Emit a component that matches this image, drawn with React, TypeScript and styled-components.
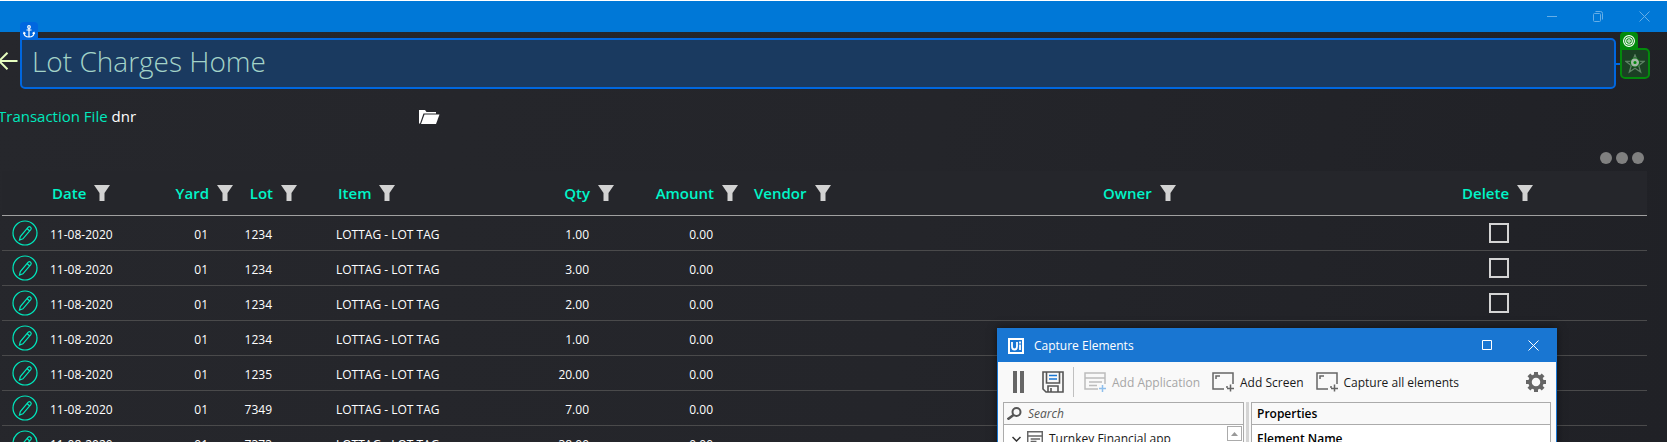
import React from 'react';
import styled, { createGlobalStyle } from 'styled-components';

const Global = createGlobalStyle`
  * { box-sizing: border-box; }
  body { margin: 0; background: #24252a; }
  button { font: inherit; color: inherit; background: none; border: 0; padding: 0; display: flex; align-items: center; }
  svg { display: block; flex: none; }
`;

const Page = styled.div`
  position: relative;
  height: 100vh;
  overflow: hidden;
  color: #fff;
  font-family: 'Open Sans', 'Noto Sans', sans-serif;
  font-size: 12px;
  background: linear-gradient(100deg, #26272c 0%, #24252a 55%, #202126 100%);
`;

const TitleBar = styled.header`
  display: flex;
  justify-content: flex-end;
  align-items: center;
  gap: 36px;
  height: 32px;
  padding-right: 17px;
  border-top: 1px solid #fff;
  background: #0078d7;
  color: #66aee7;
`;

const HeadingRow = styled.div`
  display: flex;
  align-items: center;
  margin-top: 6px;
  padding-right: 17px;
`;

const BackButton = styled.button`
  width: 20px;
  margin-bottom: 5px;
  color: #e6ffc0;
`;

const AnchorBox = styled.div`
  position: relative;
  flex: 1;
  height: 51px;
  padding-left: 10px;
  border: 2px solid #0067df;
  border-radius: 0 5px 5px 5px;
  background: #1a3a60;
`;

const Heading = styled.h1`
  margin: 0;
  font-size: 28px;
  line-height: 42px;
  font-weight: 300;
  color: #a3d3c8;
`;

const Badge = styled.span<{ $color: string }>`
  position: absolute;
  left: -2px;
  bottom: 100%;
  display: grid;
  place-items: center;
  width: 18px;
  height: 18px;
  border-radius: 4px 4px 0 0;
  background: ${p => p.$color};
  color: #fff;
`;

const Connector = styled.div`
  width: 4px;
  height: 2px;
  background: #0067df;
`;

const TargetBox = styled.div`
  position: relative;
  display: grid;
  place-items: center;
  width: 30px;
  height: 31px;
  border: 2px solid #038a0c;
  border-radius: 0 5px 5px 5px;
  background: #1b4024;
`;

const FileRow = styled.div`
  display: flex;
  align-items: center;
  height: 24px;
  margin-top: 16px;
  font-size: 15px;
`;

const FileName = styled.div`
  display: flex;
  gap: 4px;
  width: 421px;
  margin: 0 0 2px -2px;
`;

const FileLabel = styled.span`
  color: #00e8bd;
`;

const MoreRow = styled.div`
  display: flex;
  justify-content: flex-end;
  margin: 23px 23px 7px 0;
`;

const MoreButton = styled.button`
  gap: 4px;
`;

const Dot = styled.span`
  width: 12px;
  height: 12px;
  border-radius: 50%;
  background: #808080;
`;

const TableWrap = styled.div`
  padding: 0 20px 0 2px;
`;

const Table = styled.table`
  width: 100%;
  table-layout: fixed;
  border-collapse: separate;
  border-spacing: 0;
`;

type CellProps = { $right?: boolean; $inset?: number; $text?: boolean };

const Th = styled.th<CellProps>`
  height: 45px;
  padding: 0 2px 0 ${p => (p.$inset ?? 0) + 4}px;
  border-bottom: 1px solid #a0a0a0;
  background: #25262b;
  color: #00f5c8;
  font-size: 15px;
  font-weight: 600;
`;

const ThContent = styled.div<CellProps>`
  display: flex;
  align-items: center;
  justify-content: ${p => (p.$right ? 'flex-end' : 'flex-start')};
  gap: 8px;
`;

const Td = styled.td<CellProps>`
  height: 35px;
  padding: ${p => (p.$text ? 2 : 0)}px ${p => (p.$right ? 27 : 0)}px 0 ${p => (p.$inset ?? 0) + 2}px;
  border-bottom: 1px solid #4a4a4b;
  text-align: ${p => (p.$right ? 'right' : 'left')};
  white-space: nowrap;
`;

const EditButton = styled.button`
  margin-left: 10px;
  color: #00e8bd;
`;

const Check = styled.input`
  appearance: none;
  display: block;
  width: 20px;
  height: 20px;
  margin: 0 0 0 29px;
  border: 2px solid #d4d4d4;
`;

const Dialog = styled.section`
  position: absolute;
  top: 328px;
  right: 110px;
  width: 560px;
  height: 420px;
  display: flex;
  flex-direction: column;
  border: 1px solid #1976d2;
  background: #f9f9f9;
  color: #1a1a1a;
  box-shadow: 0 0 8px rgba(0, 0, 0, 0.5);
`;

const DialogTitle = styled.div`
  display: flex;
  align-items: center;
  gap: 10px;
  height: 33px;
  padding: 0 17px 0 10px;
  background: #1976d2;
  color: #fff;
`;

const DialogName = styled.span`
  flex: 1;
`;

const DialogControls = styled.div`
  display: flex;
  gap: 36px;
`;

const Toolbar = styled.div`
  display: flex;
  align-items: center;
  height: 40px;
  padding: 0 10px 0 15px;
`;

const ToolButton = styled.button<{ $gap?: number }>`
  gap: 6px;
  margin-right: ${p => p.$gap ?? 0}px;
  white-space: nowrap;
  &:disabled { color: #a6a6a6; }
`;

const Divider = styled.span`
  width: 1px;
  height: 30px;
  margin: 0 10px 0 9px;
  background: #c0c0c0;
`;

const Spacer = styled.span`
  flex: 1;
`;

const Panels = styled.div`
  flex: 1;
  display: grid;
  grid-template-columns: 241px 3px 1fr;
  gap: 2px;
  padding: 0 5px;
`;

const Panel = styled.div`
  border: 1px solid #ababab;
  background: #fff;
`;

const Splitter = styled.div`
  background: #d4d4d4;
`;

const PanelHead = styled.div`
  display: flex;
  align-items: center;
  gap: 6px;
  height: 22px;
  padding: 0 3px;
  border-bottom: 1px solid #ababab;
  background: #f9f9f9;
`;

const SearchInput = styled.input`
  flex: 1;
  min-width: 0;
  padding: 0;
  border: 0;
  outline: 0;
  background: none;
  font: italic 12px 'Open Sans', sans-serif;
  &::placeholder { color: #555; opacity: 1; }
`;

const PanelTitle = styled.h2`
  margin: 0 0 0 2px;
  font-size: 12px;
  font-weight: 600;
  color: #000;
`;

const FieldName = styled.div`
  padding: 5px;
  font-weight: 600;
  color: #000;
`;

const TreeRow = styled.div`
  display: flex;
  align-items: flex-start;
  justify-content: space-between;
  padding: 1px 1px 0 8px;
`;

const TreeItem = styled.div`
  display: flex;
  align-items: center;
  gap: 6px;
  padding-top: 4px;
`;

const ScrollUp = styled.button`
  justify-content: center;
  width: 15px;
  height: 15px;
  border: 1px solid #ababab;
`;

const Funnel = () => (
  <svg width="16" height="16" viewBox="0 0 16 16" fill="#d2d2d2"><path d="M0 0h16L10.500 8v8h-5V8z" /></svg>
);

const CloseIcon = () => (
  <svg width="11" height="11" viewBox="0 0 11 11" stroke="currentColor"><path d="M.5.5l10 10M10.5.5l-10 10" /></svg>
);

const AppIcon = ({ plus, size = 22 }: { plus?: boolean; size?: number }) => (
  <svg width={size} height={size} viewBox="0 0 22 22" fill="none" stroke={plus ? '#bcbcbc' : '#666'} strokeWidth={plus ? 1.5 : 2}>
    <path d={plus ? 'M14 18H1V2h20v11' : 'M1 1h20v20H1z'} />
    <path d="M1 7h20M5 11h13M5 14.5h8" />
    {plus && <path d="M18.500 14v7M15 17.500h7" stroke="#8fbfec" />}
  </svg>
);

const ScreenIcon = () => (
  <svg width="22" height="22" viewBox="0 0 22 22" fill="none" stroke="#666" strokeWidth="1.500">
    <path d="M12 18H1V2h20v11M4 8V5h4M14 16h2" />
    <path d="M18.500 13.500v7M15 17.500h7" />
  </svg>
);

type Column = { key: string; label: string; width?: number; right?: boolean; inset?: number };

const columns: Column[] = [
  { key: 'date', label: 'Date', width: 121 },
  { key: 'yard', label: 'Yard', width: 66, right: true },
  { key: 'lot', label: 'Lot', width: 64, right: true },
  { key: 'item', label: 'Item', width: 241, inset: 35 },
  { key: 'qty', label: 'Qty', width: 76, right: true },
  { key: 'amount', label: 'Amount', width: 124, right: true },
  { key: 'vendor', label: 'Vendor', inset: 10 },
  { key: 'owner', label: 'Owner' },
  { key: 'delete', label: 'Delete', width: 189 },
];

const charges = [
  ['1234', '1.00'],
  ['1234', '3.00'],
  ['1234', '2.00'],
  ['1234', '1.00'],
  ['1235', '20.00'],
  ['7349', '7.00'],
  ['7373', '38.00'],
].map(([lot, qty]) => ({
  date: '11-08-2020', yard: '01', lot, item: 'LOTTAG - LOT TAG', qty, amount: '0.00', vendor: '', owner: '',
} as Record<string, string>));

export default function App() {
  return (
    <Page>
      <Global />
      <TitleBar>
        <button aria-label="Minimize"><svg width="10" height="11" stroke="currentColor"><path d="M0 5.500h10" /></svg></button>
        <button aria-label="Restore">
          <svg width="10" height="11" viewBox="0 0 10 11" fill="none" stroke="currentColor">
            <rect x=".5" y="2.500" width="7" height="8" rx="1" /><path d="M2.500.5h5q2 0 2 2v6" />
          </svg>
        </button>
        <button aria-label="Close"><CloseIcon /></button>
      </TitleBar>
      <HeadingRow>
        <BackButton aria-label="Back">
          <svg width="18" height="18" viewBox="0 0 18 18" fill="none" stroke="currentColor" strokeWidth="2"><path d="M7.500.7L-1 9l8.500 8.300M-1 9h18.500" /></svg>
        </BackButton>
        <AnchorBox>
          <Badge $color="#0067df">
            <svg width="12" height="13" viewBox="0 0 12 13" fill="none" stroke="currentColor" strokeWidth="1.200">
              <circle cx="6" cy="2" r="1.300" /><path d="M6 3.300V12M3.500 5h5M1 7.500Q1 12 6 12t5-4.500M.3 9L1 7.500 2.500 8.500M11.700 9L11 7.500 9.500 8.500" />
            </svg>
          </Badge>
          <Heading>Lot Charges Home</Heading>
        </AnchorBox>
        <Connector />
        <TargetBox>
          <Badge $color="#038a0c">
            <svg width="12" height="12" viewBox="0 0 12 12" fill="none" stroke="currentColor" strokeWidth="1.100">
              <circle cx="6" cy="6" r="5.400" /><circle cx="6" cy="6" r="3.300" /><circle cx="6" cy="6" r="1.200" />
            </svg>
          </Badge>
          <svg width="20" height="20" viewBox="0 0 20 20" fill="none" stroke="#5f8265" strokeWidth="1.300">
            <path d="M10 1l2.300 6.200 6.700.2-5.300 4.100 1.900 6.500-5.600-3.800L4.400 18l1.900-6.500L1 7.400l6.700-.2z" />
            <circle cx="10" cy="8.500" r="4.500" stroke="#0a7a12" strokeWidth="1" />
            <circle cx="10" cy="8.500" r="2.800" stroke="#a4b8a7" strokeWidth="2.400" fill="#038a0c" />
          </svg>
        </TargetBox>
      </HeadingRow>
      <FileRow>
        <FileName><FileLabel>Transaction File</FileLabel><span>dnr</span></FileName>
        <button aria-label="Open file">
          <svg width="21" height="15" viewBox="0 0 21 15" fill="#fff"><path d="M0 0h6l1.500 2H17v1.500H4.500L1 13.500H0z" /><path d="M5.500 4.500H20.500L17 14H2z" /></svg>
        </button>
      </FileRow>
      <MoreRow><MoreButton aria-label="More"><Dot /><Dot /><Dot /></MoreButton></MoreRow>
      <TableWrap>
        <Table>
          <colgroup>
            <col style={{ width: 46 }} />
            {columns.map(c => <col key={c.key} style={{ width: c.width }} />)}
          </colgroup>
          <thead>
            <tr>
              <Th aria-label="Edit" />
              {columns.map(c => (
                <Th key={c.key} $inset={c.inset}>
                  <ThContent $right={c.right}>{c.label}<button aria-label={`Filter ${c.label}`}><Funnel /></button></ThContent>
                </Th>
              ))}
            </tr>
          </thead>
          <tbody>
            {charges.map((row, i) => (
              <tr key={i}>
                <Td $inset={-2}>
                  <EditButton aria-label="Edit charge">
                    <svg width="26" height="26" viewBox="0 0 26 26" fill="none" stroke="currentColor" strokeWidth="1.200">
                      <circle cx="13" cy="13" r="12" />
                      <path d="M7.500 20l.8-3.500 7.900-9.300q1.200-1 2.400 0t.2 2.400l-7.900 9.200zM15 8.500l2.500 2.200" />
                    </svg>
                  </EditButton>
                </Td>
                {columns.map(c => (
                  <Td key={c.key} $right={c.right} $inset={c.inset} $text={c.key !== 'delete'}>
                    {c.key === 'delete' ? <Check type="checkbox" aria-label={`Delete charge ${i + 1}`} /> : row[c.key]}
                  </Td>
                ))}
              </tr>
            ))}
          </tbody>
        </Table>
      </TableWrap>
      <Dialog aria-label="Capture Elements">
        <DialogTitle>
          <svg width="16" height="16" viewBox="0 0 16 16" fill="none" stroke="#fff" strokeWidth="2">
            <path d="M1 1h14v14H1z" /><path d="M4 4v4.500Q4 11.500 6.500 11.500T9 8.500V4M12 6.500V12M12 3.500v2" strokeWidth="1.800" />
          </svg>
          <DialogName>Capture Elements</DialogName>
          <DialogControls>
            <button aria-label="Maximize"><svg width="10" height="11" fill="none" stroke="#fff"><path d="M.5.500h9v9h-9z" /></svg></button>
            <button aria-label="Close dialog"><CloseIcon /></button>
          </DialogControls>
        </DialogTitle>
        <Toolbar>
          <ToolButton $gap={18} aria-label="Pause"><svg width="11" height="22" fill="#666"><path d="M0 0h4v22H0zM7 0h4v22H7z" /></svg></ToolButton>
          <ToolButton aria-label="Save">
            <svg width="22" height="22" viewBox="0 0 22 22" fill="none" stroke="#555" strokeWidth="1.600">
              <path d="M1 1h20v20H4L1 18zM4.500 1v11h13V1M6 21v-6h10v6M9 17v4" /><path d="M7 4.500h8M7 8h8" stroke="#1976d2" />
            </svg>
          </ToolButton>
          <Divider />
          <ToolButton $gap={12} disabled><AppIcon plus />Add Application</ToolButton>
          <ToolButton $gap={12}><ScreenIcon />Add Screen</ToolButton>
          <ToolButton><ScreenIcon />Capture all elements</ToolButton>
          <Spacer />
          <ToolButton aria-label="Settings">
            <svg width="20" height="20" viewBox="-10 -10 20 20" fill="none" stroke="#666">
              <circle r="6" strokeWidth="3.500" />
              {[0, 45, 90, 135, 180, 225, 270, 315].map(a => <path key={a} d="M0-7v-3" strokeWidth="4" transform={`rotate(${a})`} />)}
            </svg>
          </ToolButton>
        </Toolbar>
        <Panels>
          <Panel>
            <PanelHead>
              <svg width="15" height="13" viewBox="0 0 15 13" fill="none" stroke="#555" strokeWidth="2"><circle cx="9.500" cy="5" r="4" /><path d="M6.500 8L.5 12.500" strokeWidth="2.500" /></svg>
              <SearchInput aria-label="Search" placeholder="Search" />
            </PanelHead>
            <TreeRow>
              <TreeItem>
                <svg width="9" height="9" fill="none" stroke="#333" strokeWidth="1.500"><path d="M.5 3l4 4 4-4" /></svg>
                <AppIcon size={16} />
                Turnkey Financial app
              </TreeItem>
              <ScrollUp aria-label="Scroll up"><svg width="7" height="4" fill="#999"><path d="M0 4l3.500-4L7 4z" /></svg></ScrollUp>
            </TreeRow>
          </Panel>
          <Splitter />
          <Panel>
            <PanelHead><PanelTitle>Properties</PanelTitle></PanelHead>
            <FieldName>Element Name</FieldName>
          </Panel>
        </Panels>
      </Dialog>
    </Page>
  );
}
